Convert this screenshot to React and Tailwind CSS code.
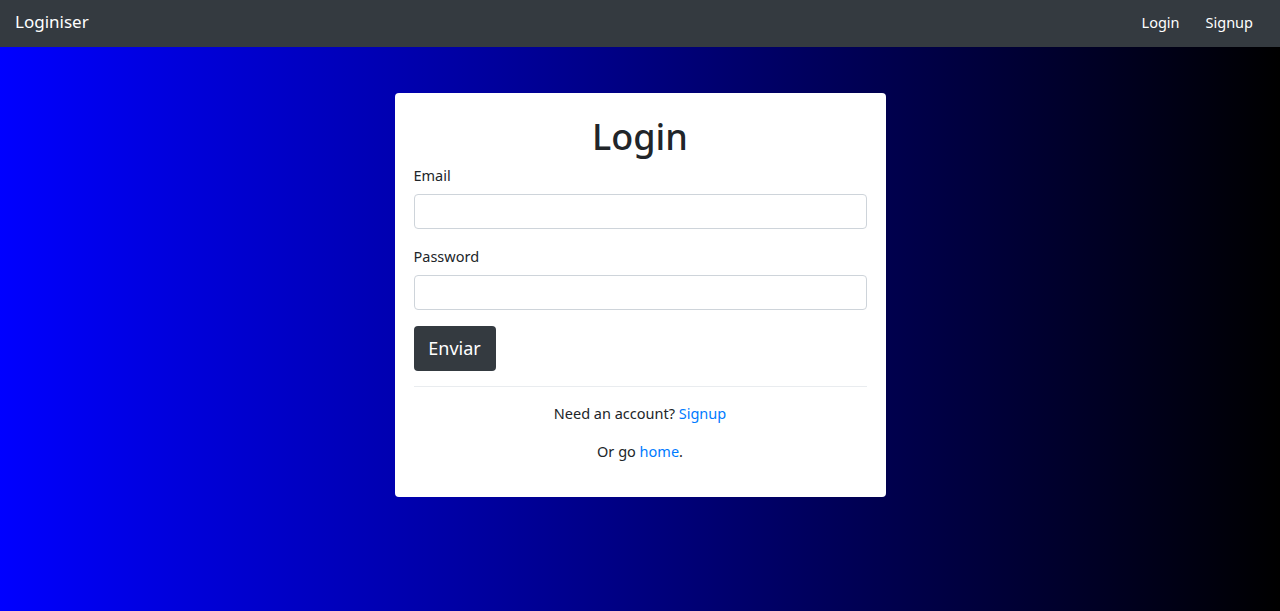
export default function App() {
  const font = { fontFamily: '"Noto Sans", "Open Sans", Arial, sans-serif' };
  return (
    <div className="min-h-[611px] flex flex-col text-[#212529]" style={font}>
      <nav className="h-[47px] bg-[#343a40] flex items-center justify-between pl-[15px] pr-[27px] pb-[3px]">
        <span className="text-white text-[17px] leading-[24px]">Loginiser</span>
        <div className="flex items-center gap-[26px] text-[14.5px] leading-[22px]">
          <a className="text-white">Login</a>
          <a className="text-white">Signup</a>
        </div>
      </nav>
      <main className="flex-1 bg-[linear-gradient(to_right,#0000ff,#000000)] flex justify-center items-start pt-[46px]">
        <div className="w-[491px] bg-white rounded-[4px] px-[19px] pt-[22px] pb-[35px]">
          <h1 className="text-center text-[36px] leading-[43px] font-medium">Login</h1>
          <div className="mt-[6px]">
            <label className="block text-[14.5px] leading-[22px]">Email</label>
            <input type="email" className="mt-[8px] block w-full h-[35px] border border-[#ced4da] rounded-[4px] bg-white" />
          </div>
          <div className="mt-[16px]">
            <label className="block text-[14.5px] leading-[22px]">Password</label>
            <input type="password" className="mt-[8px] block w-full h-[35px] border border-[#ced4da] rounded-[4px] bg-white" />
          </div>
          <button className="mt-[16px] w-[82px] h-[45px] bg-[#343a40] text-white text-[18px] rounded-[4px] flex items-center justify-center">
            Enviar
          </button>
          <hr className="mt-[15px] border-0 border-t border-[#e9ecef]" />
          <p className="mt-[15px] text-center text-[14.5px] leading-[22px]">
            Need an account? <a className="text-[#007bff]">Signup</a>
          </p>
          <p className="mt-[16px] text-center text-[14.5px] leading-[22px]">
            Or go <a className="text-[#007bff]">home</a>.
          </p>
        </div>
      </main>
    </div>
  );
}
